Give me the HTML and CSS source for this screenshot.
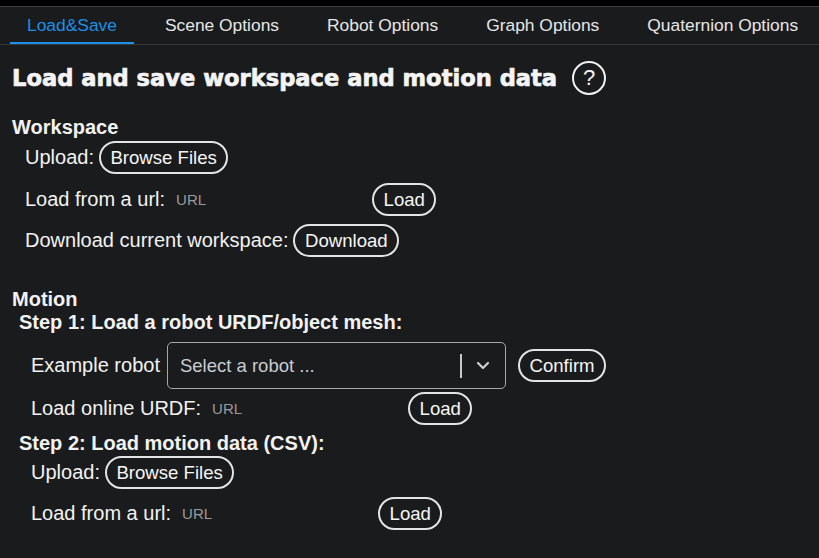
FILE: index.html
```html
<!DOCTYPE html>
<html>
<head>
<meta charset="utf-8">
<link rel="stylesheet" href="styles.css">
</head>
<body>
<div class="topstrip"></div>
<nav class="tabs">
  <div class="tab active">Load&amp;Save</div>
  <div class="tab">Scene Options</div>
  <div class="tab">Robot Options</div>
  <div class="tab">Graph Options</div>
  <div class="tab">Quaternion Options</div>
</nav>
<main class="content">
  <div class="title-row">
    <h1 class="title">Load and save workspace and motion data</h1>
    <span class="help">?</span>
  </div>

  <div class="section-label workspace-label">Workspace</div>
  <div class="group group-ws">
    <div class="row r-first">
      <span class="label">Upload:</span>
      <span class="btn">Browse Files</span>
    </div>
    <div class="row r-9">
      <span class="label">Load from a url:</span>
      <span class="url">URL</span>
      <span class="btn">Load</span>
    </div>
    <div class="row r-8">
      <span class="label">Download current workspace:</span>
      <span class="btn">Download</span>
    </div>
  </div>

  <div class="section-label motion-label">Motion</div>
  <div class="step">Step 1: Load a robot URDF/object mesh:</div>
  <div class="group group-mo">
    <div class="row r-select">
      <span class="label">Example robot</span>
      <div class="select">
        <span class="placeholder">Select a robot ...</span>
        <span class="indicator">
          <span class="sep"></span>
          <svg class="chev" width="14" height="9" viewBox="0 0 14 9"><polyline points="2,2 7,7 12,2" fill="none" stroke="#cfcfcf" stroke-width="2.2" stroke-linecap="round" stroke-linejoin="round"/></svg>
        </span>
      </div>
      <span class="btn confirm">Confirm</span>
    </div>
    <div class="row r-3">
      <span class="label">Load online URDF:</span>
      <span class="url url-tight">URL</span>
      <span class="btn">Load</span>
    </div>
  </div>
  <div class="step step2">Step 2: Load motion data (CSV):</div>
  <div class="group group-mo">
    <div class="row r-first2">
      <span class="label">Upload:</span>
      <span class="btn">Browse Files</span>
    </div>
    <div class="row r-8">
      <span class="label">Load from a url:</span>
      <span class="url">URL</span>
      <span class="btn">Load</span>
    </div>
  </div>
</main>
</body>
</html>
```

FILE: styles.css
```css
html, body {
  margin: 0;
  padding: 0;
}
body {
  background: #1a1b1d;
  color: #f2f2f2;
  font-family: "Liberation Sans", Arial, sans-serif;
  width: 819px;
  height: 558px;
  overflow: hidden;
}
.topstrip {
  height: 6px;
  background: #000;
  border-bottom: 1px solid #3c3c3e;
}
.tabs {
  display: flex;
  gap: 14px;
  padding-left: 10px;
  height: 37px;
  border-bottom: 1px solid #36373a;
}
.tab {
  padding: 0 17px;
  font-size: 17.4px;
  line-height: 36px;
  color: #e6e6e6;
  border-bottom: 2px solid transparent;
  height: 35px;
  white-space: nowrap;
}
.tab.active {
  color: #1d8fe6;
  border-bottom-color: #1d8fe6;
}
.content {
  padding-left: 12px;
}
.title-row {
  display: flex;
  align-items: center;
  margin-top: 16px;
  height: 34px;
}
.title {
  margin: 0;
  font-family: "DejaVu Sans", sans-serif;
  font-weight: bold;
  font-size: 22.6px;
  line-height: 34px;
  color: #f4f4f4;
  -webkit-text-stroke: 0.7px #f4f4f4;
}
.help {
  margin-left: 15px;
  width: 30px;
  height: 30px;
  border: 2px solid #f2f2f2;
  border-radius: 50%;
  display: flex;
  align-items: center;
  justify-content: center;
  font-size: 22px;
  line-height: 1;
  color: #f4f4f4;
}
.section-label {
  font-weight: bold;
  font-size: 20px;
  line-height: 23px;
}
.workspace-label {
  margin-top: 21px;
}
.motion-label {
  margin-top: 31px;
}
.step {
  font-weight: bold;
  font-size: 20px;
  line-height: 23px;
  padding-left: 7px;
}
.step2 {
  margin-top: 7px;
}
.group-ws {
  padding-left: 13px;
}
.group-mo {
  padding-left: 19px;
}
.row {
  display: flex;
  align-items: center;
  height: 33px;
}
.r-first { margin-top: 2px; }
.r-first2 { margin-top: 1px; }
.r-9 { margin-top: 9px; }
.r-8 { margin-top: 8px; }
.r-3 { margin-top: 3px; }
.r-select {
  margin-top: 8px;
  height: 47px;
}
.label {
  font-size: 20px;
  line-height: 23px;
  white-space: nowrap;
}
.btn {
  margin-left: 5px;
  border: 2px solid #e4e4e4;
  border-radius: 999px;
  padding: 0 9.5px;
  height: 29px;
  line-height: 29px;
  font-size: 18.6px;
  color: #f6f6f6;
  white-space: nowrap;
}
.url {
  margin-left: 11px;
  width: 196px;
  flex: none;
  font-size: 15px;
  color: #9a9a9a;
}
.url-tight {
  margin-left: 11px;
}
.url + .btn {
  margin-left: 0;
}
.select {
  margin-left: 7px;
  width: 337px;
  height: 45px;
  border: 1px solid #a8a8a8;
  border-radius: 5px;
  display: flex;
  align-items: center;
}
.placeholder {
  flex: 1;
  padding-left: 12px;
  font-size: 18.5px;
  color: #c9ccd2;
}
.indicator {
  display: flex;
  align-items: center;
  height: 100%;
}
.sep {
  width: 2px;
  height: 24px;
  background: #c8c8c8;
}
.chev {
  margin: 0 15px 0 14px;
}
.confirm {
  margin-left: 12px;
}
```
